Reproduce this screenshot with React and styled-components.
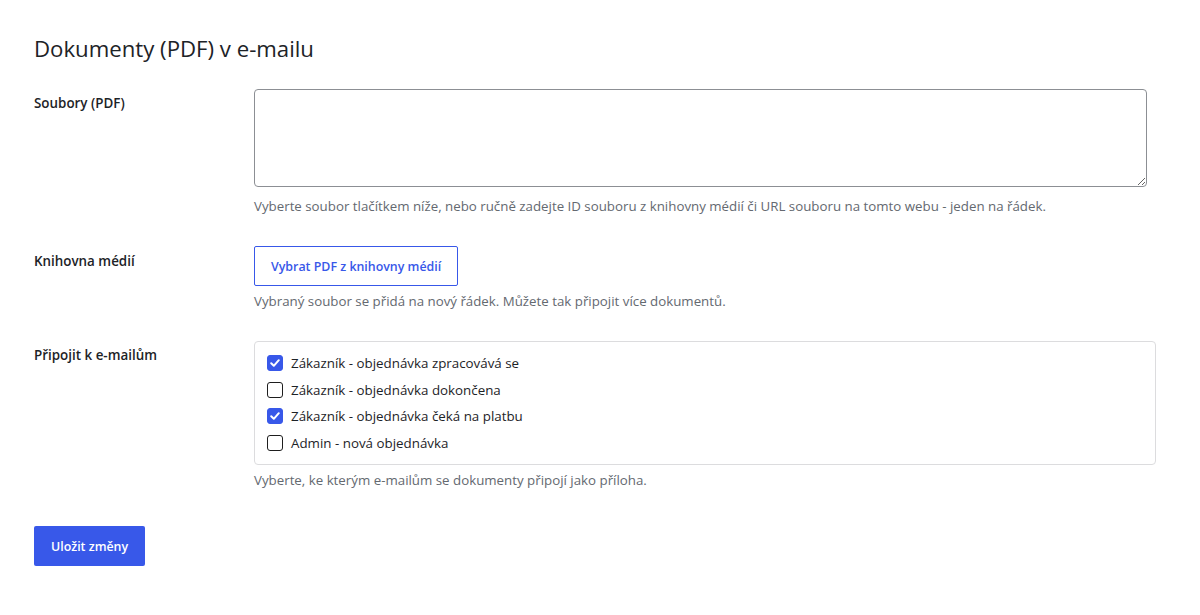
import React, { useState } from "react";
import styled, { createGlobalStyle } from "styled-components";

const Global = createGlobalStyle`
  html, body { margin: 0; padding: 0; background: #fff; }
  body { font-family: "Open Sans", "Noto Sans", sans-serif; color: #1d2327; }
  * { box-sizing: border-box; }
`;

const Page = styled.div`
  padding: 29px 34px 0 34px;
  width: 1200px;
`;

const Title = styled.h2`
  margin: 0 0 21px 0;
  padding-top: 1px;
  font-size: 22.2px;
  font-weight: 400;
  line-height: 38px;
  color: #1d2327;
`;

const Row = styled.div`
  display: grid;
  grid-template-columns: 220px 1fr;
  margin-bottom: ${(p) => p.$gap || 0}px;
`;

const Label = styled.div`
  font-size: 13.4px;
  font-weight: 600;
  line-height: 20px;
  padding-top: ${(p) => p.$top || 0}px;
  color: #1d2327;
`;

const Field = styled.div`
  display: flex;
  flex-direction: column;
  align-items: flex-start;
`;

const TextArea = styled.textarea`
  width: 893px;
  height: 98px;
  border: 1px solid #8c8f94;
  border-radius: 4px;
  font-family: inherit;
  font-size: 14px;
  padding: 6px 8px;
  margin: 0;
  display: block;
  resize: vertical;
`;

const Desc = styled.p`
  margin: ${(p) => p.$top || 10}px 0 0 0;
  font-size: 13.3px;
  line-height: 20px;
  color: #646970;
`;

const OutlineButton = styled.button`
  height: 40px;
  padding: 0 16px;
  background: #fff;
  border: 1px solid #3858e9;
  border-radius: 2px;
  color: #3858e9;
  font-family: inherit;
  font-size: 12.4px;
  font-weight: 600;
  cursor: pointer;
`;

const CheckBox = styled.div`
  width: 902px;
  border: 1px solid #dcdcde;
  border-radius: 4px;
  padding: 8px 12px 8px 12px;
  display: flex;
  flex-direction: column;
`;

const CheckRow = styled.label`
  display: flex;
  align-items: center;
  gap: 8px;
  height: 26.5px;
  font-size: 13.35px;
  color: #1d2327;
  cursor: pointer;
`;

const Box = styled.span`
  width: 16px;
  height: 16px;
  border-radius: 3px;
  border: 1px solid ${(p) => (p.$checked ? "#3858e9" : "#1e1e1e")};
  background: ${(p) => (p.$checked ? "#3858e9" : "#fff")};
  display: flex;
  align-items: center;
  justify-content: center;
  flex: none;
`;

const SaveButton = styled.button`
  height: 40px;
  padding: 0 17px;
  background: #3858e9;
  border: none;
  border-radius: 2px;
  color: #fff;
  font-family: inherit;
  font-size: 12.4px;
  font-weight: 600;
  cursor: pointer;
`;

const items = [
  ["Zákazník - objednávka zpracovává se", true],
  ["Zákazník - objednávka dokončena", false],
  ["Zákazník - objednávka čeká na platbu", true],
  ["Admin - nová objednávka", false],
];

export default function App() {
  const [checks, setChecks] = useState(items.map((i) => i[1]));
  return (
    <Page>
      <Global />
      <Title>Dokumenty (PDF) v e-mailu</Title>
      <Row $gap={30}>
        <Label $top={4}>Soubory (PDF)</Label>
        <Field>
          <TextArea />
          <Desc $top={9}>
            Vyberte soubor tlačítkem níže, nebo ručně zadejte ID souboru z knihovny médií či URL souboru na tomto webu - jeden na řádek.
          </Desc>
        </Field>
      </Row>
      <Row $gap={30}>
        <Label $top={5}>Knihovna médií</Label>
        <Field>
          <OutlineButton>Vybrat PDF z knihovny médií</OutlineButton>
          <Desc $top={5}>Vybraný soubor se přidá na nový řádek. Můžete tak připojit více dokumentů.</Desc>
        </Field>
      </Row>
      <Row $gap={36}>
        <Label $top={4}>Připojit k e-mailům</Label>
        <Field>
          <CheckBox>
            {items.map(([text], i) => (
              <CheckRow key={text} onClick={() => setChecks((c) => c.map((v, j) => (j === i ? !v : v)))}>
                <Box $checked={checks[i]}>
                  {checks[i] && (
                    <svg width="12" height="12" viewBox="0 0 12 12">
                      <path d="M2.2 6.2 L4.8 8.8 L9.8 3.2" fill="none" stroke="#fff" strokeWidth="2" strokeLinecap="round" strokeLinejoin="round" />
                    </svg>
                  )}
                </Box>
                {text}
              </CheckRow>
            ))}
          </CheckBox>
          <Desc $top={5}>Vyberte, ke kterým e-mailům se dokumenty připojí jako příloha.</Desc>
        </Field>
      </Row>
      <SaveButton>Uložit změny</SaveButton>
    </Page>
  );
}
